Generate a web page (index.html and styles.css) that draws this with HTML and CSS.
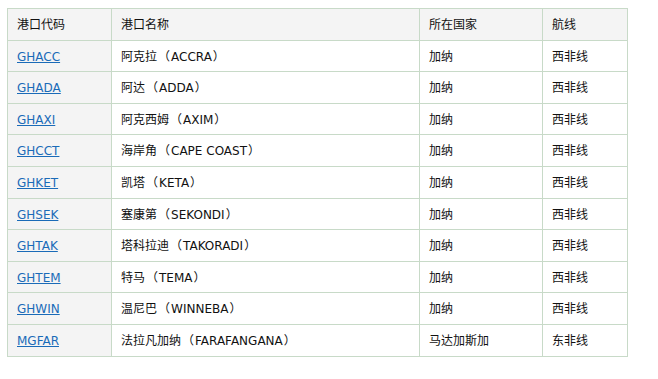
FILE: index.html
```html
<!DOCTYPE html>
<html lang="zh">
<head>
<meta charset="utf-8">
<link rel="stylesheet" href="styles.css">
</head>
<body>
<table class="ports">
  <colgroup>
    <col class="c1"><col class="c2"><col class="c3"><col class="c4">
  </colgroup>
  <tr class="head"><td>港口代码</td><td>港口名称</td><td>所在国家</td><td>航线</td></tr>
  <tr><td><a href="#">GHACC</a></td><td>阿克拉<span class="p">（</span>ACCRA<span class="p">）</span></td><td>加纳</td><td>西非线</td></tr>
  <tr><td><a href="#">GHADA</a></td><td>阿达<span class="p">（</span>ADDA<span class="p">）</span></td><td>加纳</td><td>西非线</td></tr>
  <tr><td><a href="#">GHAXI</a></td><td>阿克西姆<span class="p">（</span>AXIM<span class="p">）</span></td><td>加纳</td><td>西非线</td></tr>
  <tr><td><a href="#">GHCCT</a></td><td>海岸角<span class="p">（</span>CAPE COAST<span class="p">）</span></td><td>加纳</td><td>西非线</td></tr>
  <tr><td><a href="#">GHKET</a></td><td>凯塔<span class="p">（</span>KETA<span class="p">）</span></td><td>加纳</td><td>西非线</td></tr>
  <tr><td><a href="#">GHSEK</a></td><td>塞康第<span class="p">（</span>SEKONDI<span class="p">）</span></td><td>加纳</td><td>西非线</td></tr>
  <tr><td><a href="#">GHTAK</a></td><td>塔科拉迪<span class="p">（</span>TAKORADI<span class="p">）</span></td><td>加纳</td><td>西非线</td></tr>
  <tr><td><a href="#">GHTEM</a></td><td>特马<span class="p">（</span>TEMA<span class="p">）</span></td><td>加纳</td><td>西非线</td></tr>
  <tr><td><a href="#">GHWIN</a></td><td>温尼巴<span class="p">（</span>WINNEBA<span class="p">）</span></td><td>加纳</td><td>西非线</td></tr>
  <tr><td><a href="#">MGFAR</a></td><td>法拉凡加纳<span class="p">（</span>FARAFANGANA<span class="p">）</span></td><td>马达加斯加</td><td>东非线</td></tr>
</table>
</body>
</html>
```
FILE: styles.css
```css
html, body {
  margin: 0;
  padding: 0;
  background: #fff;
}
body {
  padding: 8px 0 0 7px;
  font-family: "DejaVu Sans", "Noto Sans CJK SC", sans-serif;
  font-size: 12px;
  color: #111;
}
.ports {
  border-collapse: collapse;
  width: 620px;
  table-layout: fixed;
}
.c1 { width: 104px; }
.c2 { width: 308px; }
.c3 { width: 123px; }
.c4 { width: 85px; }
.ports td {
  border: 1px solid #c8dac8;
  padding: 7px 9px 5.6px 9px;
  line-height: 18px;
  white-space: nowrap;
  vertical-align: middle;
}
.ports td:first-child {
  background: #f4f4f4;
}
.ports .head td {
  background: #f4f4f4;
}
.ports a {
  color: #1a6bb8;
  text-decoration: underline;
}
.p {
  font-family: "Noto Sans CJK TC", sans-serif;
  line-height: 0;
  margin: 0 1px;
}
```
